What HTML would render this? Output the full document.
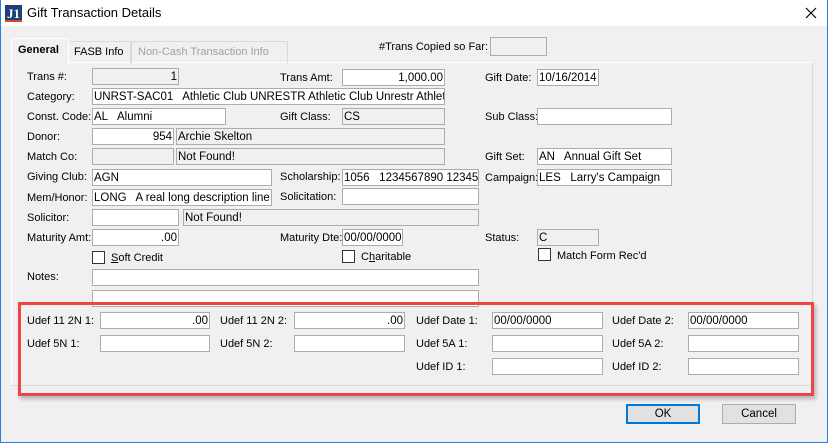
<!DOCTYPE html>
<html><head><style>
*{box-sizing:border-box;margin:0;padding:0}
body{width:828px;height:443px;background:#f0f0f0;font-family:"Liberation Sans",sans-serif;font-size:11px;color:#000;position:relative;overflow:hidden}
.win{position:absolute;left:0;top:0;width:828px;height:443px;border:1px solid #2b7fd6;border-top:none}
.title{position:absolute;left:0;top:0;width:828px;height:26px;background:#fff}
.a{position:absolute;white-space:nowrap}
.f{position:absolute;height:17px;border:1px solid #acacac;background:#fff;line-height:16px;padding:0 1px;overflow:hidden;white-space:nowrap;font-size:11.5px}
.g{background:#f0f0f0}
.r{text-align:right}
.cb{position:absolute;width:13px;height:13px;border:1px solid #333;background:#fff}
.btn{position:absolute;height:20px;border:1px solid #adadad;background:#e1e1e1;text-align:center;line-height:18px;font-size:11.5px}
</style></head><body>
<div class="title"></div>
<div class="a" style="left:5px;top:5px;width:17px;height:17px;background:#1e3f7a;color:#fff;font:bold 13px 'Liberation Serif',serif;text-align:center;line-height:17px;border-bottom:2px solid #d94a1e">J1</div>
<div class="a" style="left:27px;top:5px;font-size:13px">Gift Transaction Details</div>
<svg class="a" style="left:805px;top:7px" width="12" height="12" viewBox="0 0 12 12"><path d="M1 1L11 11M11 1L1 11" stroke="#000" stroke-width="1.2"/></svg>
<div class="win"></div>

<div class="a" style="left:11px;top:62px;width:802px;height:324px;border:1px solid #fff;border-right-color:#dadada;border-bottom-color:#dadada;background:#f0f0f0"></div>
<div class="a" style="left:11px;top:38px;width:58px;height:26px;background:#f0f0f0;border:1px solid #fff;border-bottom:none;padding:5px 0 0 6px;font-weight:bold;z-index:2">General</div>
<div class="a" style="left:68px;top:41px;width:63px;height:22px;border:1px solid #dadada;border-bottom:none;padding:4px 0 0 5px">FASB Info</div>
<div class="a" style="left:131px;top:41px;width:157px;height:22px;border:1px solid #dadada;border-bottom:none;padding:4px 0 0 6px;color:#a0a0a0">Non-Cash Transaction Info</div>

<div class="a" style="left:300px;top:41px;width:188px;text-align:right">#Trans Copied so Far:</div>
<div class="f g" style="left:490px;top:37px;width:57px;height:19px"></div>

<div class="a" style="left:27px;top:71px">Trans #:</div>
<div class="f g r" style="left:92px;top:68px;width:87px">1</div>
<div class="a" style="left:280px;top:72px">Trans Amt:</div>
<div class="f r" style="left:342px;top:69px;width:103px">1,000.00</div>
<div class="a" style="left:485px;top:72px">Gift Date:</div>
<div class="f" style="left:537px;top:69px;width:62px">10/16/2014</div>

<div class="a" style="left:27px;top:91px">Category:</div>
<div class="f" style="left:92px;top:88px;width:353px">UNRST-SAC01&nbsp;&nbsp; Athletic Club UNRESTR Athletic Club Unrestr Athletic Club</div>

<div class="a" style="left:27px;top:111px">Const. Code:</div>
<div class="f" style="left:92px;top:108px;width:134px">AL&nbsp;&nbsp; Alumni</div>
<div class="a" style="left:280px;top:111px">Gift Class:</div>
<div class="f g" style="left:342px;top:108px;width:103px">CS</div>
<div class="a" style="left:485px;top:111px">Sub Class:</div>
<div class="f" style="left:537px;top:108px;width:135px"></div>

<div class="a" style="left:27px;top:131px">Donor:</div>
<div class="f r" style="left:92px;top:128px;width:82px">954</div>
<div class="f g" style="left:176px;top:128px;width:269px">Archie Skelton</div>

<div class="a" style="left:27px;top:151px">Match Co:</div>
<div class="f g" style="left:92px;top:148px;width:82px"></div>
<div class="f g" style="left:176px;top:148px;width:269px">Not Found!</div>
<div class="a" style="left:485px;top:151px">Gift Set:</div>
<div class="f" style="left:537px;top:148px;width:135px">AN&nbsp;&nbsp; Annual Gift Set</div>

<div class="a" style="left:27px;top:171px">Giving Club:</div>
<div class="f" style="left:92px;top:169px;width:180px">AGN</div>
<div class="a" style="left:280px;top:171px">Scholarship:</div>
<div class="f" style="left:342px;top:169px;width:137px">1056&nbsp;&nbsp; 1234567890 1234567890</div>
<div class="a" style="left:485px;top:172px">Campaign:</div>
<div class="f" style="left:537px;top:169px;width:135px">LES&nbsp;&nbsp; Larry's Campaign</div>

<div class="a" style="left:27px;top:192px">Mem/Honor:</div>
<div class="f" style="left:92px;top:189px;width:180px">LONG&nbsp;&nbsp; A real long description line A real</div>
<div class="a" style="left:280px;top:191px">Solicitation:</div>
<div class="f" style="left:342px;top:188px;width:137px"></div>

<div class="a" style="left:27px;top:212px">Solicitor:</div>
<div class="f" style="left:92px;top:209px;width:87px"></div>
<div class="f g" style="left:183px;top:209px;width:296px">Not Found!</div>

<div class="a" style="left:27px;top:232px">Maturity Amt:</div>
<div class="f r" style="left:92px;top:229px;width:87px">.00</div>
<div class="a" style="left:280px;top:232px">Maturity Dte:</div>
<div class="f" style="left:342px;top:229px;width:61px">00/00/0000</div>
<div class="a" style="left:485px;top:232px">Status:</div>
<div class="f g" style="left:537px;top:229px;width:62px">C</div>

<div class="cb" style="left:92px;top:251px"></div>
<div class="a" style="left:111px;top:252px"><u>S</u>oft Credit</div>
<div class="cb" style="left:342px;top:250px"></div>
<div class="a" style="left:361px;top:251px">C<u>h</u>aritable</div>
<div class="cb" style="left:538px;top:248px"></div>
<div class="a" style="left:557px;top:250px">Match Form Rec'd</div>

<div class="a" style="left:27px;top:271px">Notes:</div>
<div class="f" style="left:92px;top:269px;width:387px"></div>
<div class="f" style="left:92px;top:290px;width:387px"></div>

<div class="a" style="left:18px;top:302px;width:796px;height:94px;border:3px solid #ef4444;box-shadow:2px 3px 4px rgba(0,0,0,.25)"></div>

<div class="a" style="left:27px;top:315px">Udef 11 2N 1:</div>
<div class="f r" style="left:100px;top:312px;width:110px">.00</div>
<div class="a" style="left:220px;top:315px">Udef 11 2N 2:</div>
<div class="f r" style="left:294px;top:312px;width:111px">.00</div>
<div class="a" style="left:416px;top:315px">Udef Date 1:</div>
<div class="f" style="left:492px;top:312px;width:111px">00/00/0000</div>
<div class="a" style="left:612px;top:315px">Udef Date 2:</div>
<div class="f" style="left:688px;top:312px;width:111px">00/00/0000</div>

<div class="a" style="left:27px;top:338px">Udef 5N 1:</div>
<div class="f" style="left:100px;top:335px;width:110px"></div>
<div class="a" style="left:220px;top:338px">Udef 5N 2:</div>
<div class="f" style="left:294px;top:335px;width:111px"></div>
<div class="a" style="left:416px;top:338px">Udef 5A 1:</div>
<div class="f" style="left:492px;top:335px;width:111px"></div>
<div class="a" style="left:612px;top:338px">Udef 5A 2:</div>
<div class="f" style="left:688px;top:335px;width:111px"></div>

<div class="a" style="left:416px;top:361px">Udef ID 1:</div>
<div class="f" style="left:492px;top:358px;width:111px"></div>
<div class="a" style="left:612px;top:361px">Udef ID 2:</div>
<div class="f" style="left:688px;top:358px;width:111px"></div>

<div class="btn" style="left:626px;top:404px;width:74px;border:2px solid #0078d7;line-height:16px">OK</div>
<div class="btn" style="left:722px;top:404px;width:74px">Cancel</div>
</body></html>
